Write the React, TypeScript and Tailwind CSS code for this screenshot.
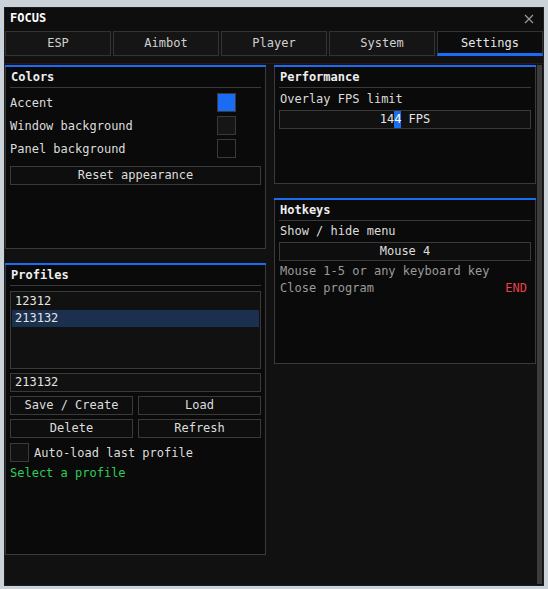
import { useState } from 'react';

const tabs = ['ESP', 'Aimbot', 'Player', 'System', 'Settings'];

// --- small building blocks ---
function Panel({ title, className, children }: { title: string; className?: string; children?: React.ReactNode }) {
  return (
    <div className={`border border-[#3a3a3a] border-t-0 bg-[#0a0a0a] flex flex-col ${className ?? ''}`}>
      <div className="h-[2px] bg-[#1a6cf5] -mx-px" />
      <div className="px-[4px]">
        <div className="h-[21px] leading-[21px] font-bold text-[#eeeeee] border-b border-[#3a3a3a] px-px">{title}</div>
      </div>
      <div className="px-[4px] flex flex-col">{children}</div>
    </div>
  );
}

function Btn({ label, className }: { label: string; className?: string }) {
  return (
    <div className={`h-[19px] leading-[17px] border border-[#3a3a3a] bg-[#0e0e0e] text-center text-[#dddddd] ${className ?? ''}`}>
      {label}
    </div>
  );
}

function Swatch({ color }: { color: string }) {
  return <div className={`w-[19px] h-[19px] border border-[#3a3a3a] ${color}`} />;
}

export default function App() {
  const [active, setActive] = useState('Settings');
  const [selected, setSelected] = useState('213132');
  const [autoLoad, setAutoLoad] = useState(false);

  return (
    <div
      className="w-[548px] h-[589px] bg-[#cbd3d9] pl-[4px] pt-[7px] text-[12px] text-[#dcdcdc]"
      style={{ fontFamily: '"DejaVu Sans Mono", "Liberation Mono", monospace' }}
    >
      <div className="w-[540px] h-[579px] bg-[#111111] border border-[#1c2024] flex flex-col overflow-hidden">
        {/* Title bar */}
        <div className="h-[23px] bg-[#0e0e0e] flex items-center justify-between pl-[5px] pr-[9px] pb-[4px]">
          <span className="font-bold text-white">FOCUS</span>
          <svg width="10" height="10" viewBox="0 0 10 10" className="text-[#9a9a9a] mt-[3px]">
            <path d="M1 1 L9 9 M9 1 L1 9" stroke="currentColor" strokeWidth="1.2" />
          </svg>
        </div>

        {/* Tab row */}
        <div className="flex gap-[2px] h-[26px] bg-[#131313]">
          {tabs.map((t) => (
            <button
              key={t}
              onClick={() => setActive(t)}
              className={`flex-1 h-[25px] border text-[12px] ${
                active === t
                  ? 'border-[#333333] border-b-[3px] border-b-[#1a6cf5] bg-[#0c0c0c] text-[#e6e6e6] leading-[22px]'
                  : 'border-[#333333] bg-[#151515] text-[#d0d0d0] leading-[23px]'
              }`}
            >
              {t}
            </button>
          ))}
        </div>

        {/* Content */}
        <div className="flex-1 flex flex-col pt-[6px]">
          <div className="flex-1 flex border-t border-[#2a1a12] pt-px">
            <div className="flex gap-[8px]">
              {/* Left column */}
              <div className="w-[261px] flex flex-col gap-[14px]">
                <Panel title="Colors" className="h-[184px]">
                  <div className="flex flex-col gap-[4px] pt-[5px]">
                    <div className="h-[19px] flex items-center justify-between pr-[25px]">
                      <span>Accent</span>
                      <Swatch color="bg-[#1a6cf5]" />
                    </div>
                    <div className="h-[19px] flex items-center justify-between pr-[25px]">
                      <span>Window background</span>
                      <Swatch color="bg-[#161616]" />
                    </div>
                    <div className="h-[19px] flex items-center justify-between pr-[25px]">
                      <span>Panel background</span>
                      <Swatch color="bg-[#0b0b0b]" />
                    </div>
                  </div>
                  <Btn label="Reset appearance" className="mt-[8px]" />
                </Panel>

                <Panel title="Profiles" className="h-[292px]">
                  <div className="mt-[5px] h-[78px] border border-[#3a3a3a] bg-[#111111] p-px flex flex-col">
                    {['12312', '213132'].map((p) => (
                      <div
                        key={p}
                        onClick={() => setSelected(p)}
                        className={`h-[17px] leading-[17px] px-[3px] text-[#e4e4e4] ${selected === p ? 'bg-[#1b2f4f]' : ''}`}
                      >
                        {p}
                      </div>
                    ))}
                  </div>
                  <div className="mt-[4px] h-[19px] leading-[17px] border border-[#3a3a3a] bg-[#111111] px-[4px] text-[#e4e4e4]">
                    {selected}
                  </div>
                  <div className="mt-[4px] grid grid-cols-2 gap-x-[5px] gap-y-[4px]">
                    <Btn label="Save / Create" />
                    <Btn label="Load" />
                    <Btn label="Delete" />
                    <Btn label="Refresh" />
                  </div>
                  <div className="mt-[5px] h-[19px] flex items-center gap-[5px]" onClick={() => setAutoLoad(!autoLoad)}>
                    <div className={`w-[19px] h-[19px] border border-[#3a3a3a] ${autoLoad ? 'bg-[#1a6cf5]' : 'bg-[#111111]'}`} />
                    <span>Auto-load last profile</span>
                  </div>
                  <div className="mt-[2px] h-[18px] leading-[18px] text-[#2ecc5a]">Select a profile</div>
                </Panel>
              </div>

              {/* Right column */}
              <div className="w-[262px] flex flex-col gap-[14px]">
                <Panel title="Performance" className="h-[119px]">
                  <div className="mt-[2px] h-[19px] leading-[19px] px-px">Overlay FPS limit</div>
                  <div className="mt-px h-[19px] leading-[17px] border border-[#3a3a3a] bg-[#111111] text-center text-[#e4e4e4]">
                    14<span className="inline-block h-[17px] bg-[#1a6cf5] text-white">4</span> FPS
                  </div>
                </Panel>

                <Panel title="Hotkeys" className="h-[166px]">
                  <div className="h-[20px] leading-[20px] px-px">Show / hide menu</div>
                  <Btn label="Mouse 4" className="mt-px" />
                  <div className="mt-[2px] h-[17px] leading-[17px] px-px text-[#9a9a9a]">Mouse 1-5 or any keyboard key</div>
                  <div className="h-[17px] leading-[17px] px-px flex justify-between text-[#9a9a9a]">
                    <span>Close program</span>
                    <span className="text-[#e8404a] pr-[3px]">END</span>
                  </div>
                </Panel>
              </div>
            </div>

            {/* Scrollbar */}
            <div className="w-[5px] ml-px bg-[#3c3c3c] h-[519px]" />
          </div>
        </div>
      </div>
    </div>
  );
}
